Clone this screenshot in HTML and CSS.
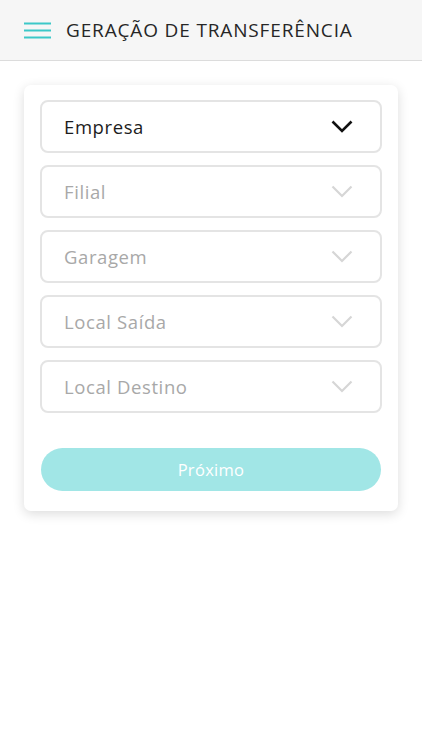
FILE: index.html
```html
<!DOCTYPE html>
<html lang="pt">
<head>
<meta charset="utf-8">
<title>Geração de Transferência</title>
<link rel="stylesheet" href="styles.css">
</head>
<body>
<header class="topbar">
  <svg class="menu-icon" width="27" height="17" viewBox="0 0 27 17">
    <path d="M0 1.5H27M0 8.5H27M0 15.5H27" stroke="#3cc8c8" stroke-width="2.2" fill="none"/>
  </svg>
  <h1 class="title">GERAÇÃO DE TRANSFERÊNCIA</h1>
</header>
<main class="content">
  <section class="card">
    <div class="selects">
      <div class="select active"><span>Empresa</span>
        <svg class="chev" width="22" height="13" viewBox="0 0 22 13"><path d="M1.5 1.5L11 11L20.5 1.5" stroke="#111" stroke-width="2.6" fill="none"/></svg>
      </div>
      <div class="select"><span>Filial</span>
        <svg class="chev" width="22" height="13" viewBox="0 0 22 13"><path d="M1.5 1.5L11 11L20.5 1.5" stroke="#d6d6d6" stroke-width="2.2" fill="none"/></svg>
      </div>
      <div class="select"><span>Garagem</span>
        <svg class="chev" width="22" height="13" viewBox="0 0 22 13"><path d="M1.5 1.5L11 11L20.5 1.5" stroke="#d6d6d6" stroke-width="2.2" fill="none"/></svg>
      </div>
      <div class="select"><span>Local Saída</span>
        <svg class="chev" width="22" height="13" viewBox="0 0 22 13"><path d="M1.5 1.5L11 11L20.5 1.5" stroke="#d6d6d6" stroke-width="2.2" fill="none"/></svg>
      </div>
      <div class="select"><span>Local Destino</span>
        <svg class="chev" width="22" height="13" viewBox="0 0 22 13"><path d="M1.5 1.5L11 11L20.5 1.5" stroke="#d6d6d6" stroke-width="2.2" fill="none"/></svg>
      </div>
    </div>
    <button class="next" type="button">Próximo</button>
  </section>
</main>
</body>
</html>
```
FILE: styles.css
```css
* { box-sizing: border-box; }
html, body { margin: 0; padding: 0; background: #fff; }
body { font-family: "Open Sans", "Noto Sans", "Liberation Sans", sans-serif; color: #222; }

.topbar {
  height: 61px;
  background: #f6f6f6;
  border-bottom: 1px solid #dcdcdc;
  display: flex;
  align-items: center;
  padding-left: 24px;
  gap: 15px;
}
.menu-icon { display: block; flex: none; }
.title {
  margin: 0;
  font-size: 19px;
  font-weight: 400;
  color: #262626;
  letter-spacing: 0.85px;
}

.content { padding: 24px 24px 40px 24px; }

.card {
  width: 374px;
  background: #fff;
  border-radius: 7px;
  box-shadow: 0 3px 12px rgba(0,0,0,0.14);
  padding: 15px 16px 20px 16px;
}

.selects { display: flex; flex-direction: column; gap: 12px; }

.select {
  height: 53px;
  border: 2px solid #e4e4e4;
  border-radius: 8px;
  display: flex;
  align-items: center;
  justify-content: space-between;
  padding: 0 27px 0 22px;
  font-size: 18.5px;
  letter-spacing: 0.6px;
  color: #a8a8a8;
}
.select.active { color: #1c1c1c; }
.chev { display: block; flex: none; }

.next {
  display: block;
  width: 340px;
  height: 43px;
  margin: 35px 0 0 1px;
  border: none;
  border-radius: 22px;
  background: #a1e6e6;
  color: #fff;
  font-family: inherit;
  font-size: 16.5px;
  letter-spacing: 0.3px;
}
```
